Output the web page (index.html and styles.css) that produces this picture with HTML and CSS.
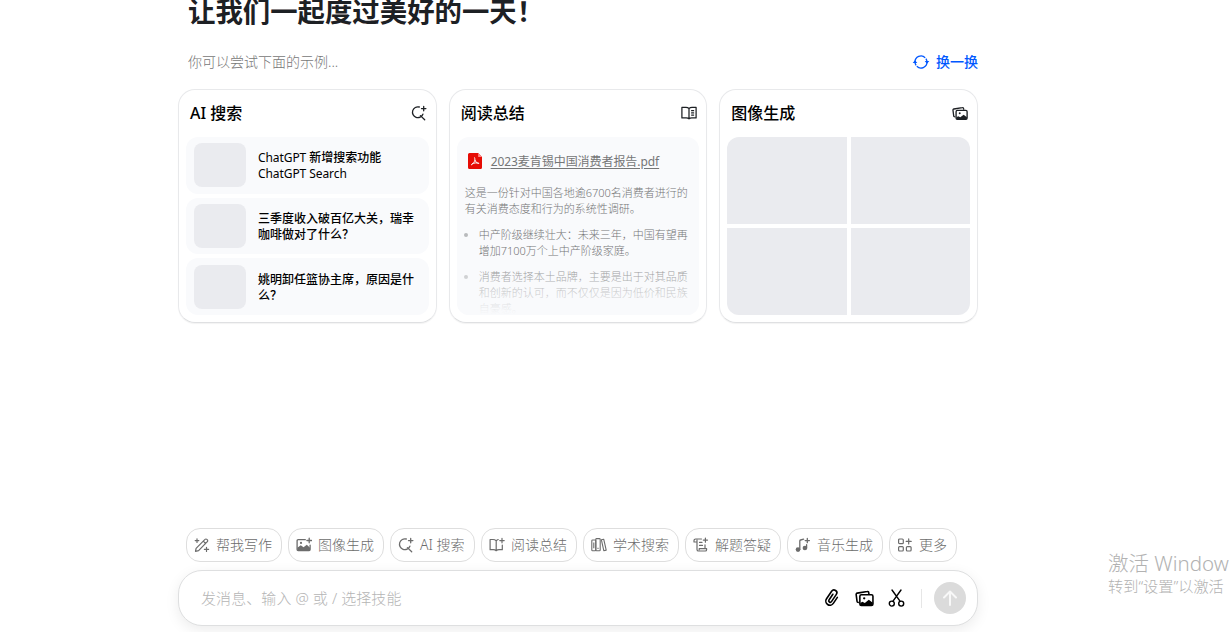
FILE: index.html
```
<!DOCTYPE html>
<html lang="zh-CN">
<head>
<meta charset="utf-8">
<title>AI 助手</title>
<link rel="stylesheet" href="styles.css">
</head>
<body>
<svg class="sprite" width="0" height="0" aria-hidden="true">
  <symbol id="i-search" viewBox="0 0 16 16"><g fill="none" stroke="currentColor" stroke-width="1.3" stroke-linecap="round"><path d="M8.300 2A5.400 5.400 0 1 0 11.900 9.200M9.400 10.600 13.700 14.700M12.700 1.400v4.400M10.500 3.600h4.400"/></g></symbol>
  <symbol id="i-photos" viewBox="0 0 18 16"><g fill="none" stroke="currentColor" stroke-width="1.5" stroke-linejoin="round"><path d="M3.700 11.700 2.600 11.500a1 1 0 0 1-.7-1L1.100 4.300a1.200 1.200 0 0 1 1-1.400l9.500-1.500a1.200 1.200 0 0 1 1.400 1l.2 1.400"/><rect x="4.600" y="4.500" width="12.400" height="10" rx="1.400"/></g><path fill="currentColor" d="M5 12.200l2-1.200 2.300 1.200 3.800-2.900 3.700 2.800v2.400H5z"/><circle cx="8.700" cy="7.800" r="1.100" fill="currentColor"/></symbol>
  <symbol id="i-plusimage" viewBox="0 0 16 16"><g fill="none" stroke="currentColor" stroke-width="1.3" stroke-linecap="round" stroke-linejoin="round"><path d="M9.300 2.700H2.100a1 1 0 0 0-1 1v8.800a1 1 0 0 0 1 1h11a1 1 0 0 0 1-1V8.200M13.200 1.200v4.600M10.900 3.500h4.600"/></g><path fill="currentColor" d="M1.300 10.800l3.500-2.600 2.700 2.100 3.300-2.500 3.200 3v2.500H1.300z"/><circle cx="5" cy="5.900" r="1.100" fill="currentColor"/></symbol>
  <symbol id="i-plusbook" viewBox="0 0 16 16"><g fill="none" stroke="currentColor" stroke-width="1.200" stroke-linecap="round" stroke-linejoin="round"><path d="M7.200 3.800Q6 2.500 4 2.500H1.100v10.200h3.200q1.800 0 2.900 1 1.100-1 2.900-1h3.200V8M7.200 3.800v9.700M7.200 3.800Q8 2.800 9.200 2.500M13 1.400v4.400M10.800 3.600h4.400"/></g></symbol>
</svg>
<main class="page">
  <h1 class="title">让我们一起度过美好的一天！</h1>
  <div class="hint">
    <span>你可以尝试下面的示例...</span>
    <a class="refresh"><svg width="16" height="16" viewBox="0 0 16 16"><g fill="none" stroke="currentColor" stroke-width="1.300"><path d="M2 8A6 6 0 0 1 12.200 3.700M12.900 4.600A6 6 0 0 1 14 8M14 8A6 6 0 0 1 3.800 12.300M3.100 11.400A6 6 0 0 1 2 8"/></g><path fill="currentColor" d="M-.3 9 2 6.300l2.300 2.700zM11.700 7h4.600L14 9.700z"/></svg><span>换一换</span></a>
  </div>
  <section class="cards">
    <article class="card">
      <header class="card-head"><h2>AI 搜索</h2><svg width="16" height="16"><use href="#i-search"/></svg></header>
      <div class="news">
        <div class="news-item"><i class="thumb"></i><p><span class="latin">ChatGPT</span> 新增搜索功能<br><span class="latin">ChatGPT Search</span></p></div>
        <div class="news-item"><i class="thumb"></i><p>三季度收入破百亿大关，瑞幸<br>咖啡做对了什么？</p></div>
        <div class="news-item"><i class="thumb"></i><p>姚明卸任篮协主席，原因是什<br>么？</p></div>
      </div>
    </article>
    <article class="card">
      <header class="card-head"><h2>阅读总结</h2><svg width="16" height="16" viewBox="0 0 16 16"><path fill="none" stroke="currentColor" stroke-width="1.250" stroke-linejoin="round" stroke-linecap="round" d="M8 3.400Q6.800 2.400 5 2.400H.9v10.500h4.300q1.800 0 2.800 1 1-1 2.800-1h4.300V2.400H11Q9.200 2.400 8 3.400zM8 3.400v10.400M10.600 5.700h2M10.600 7.900h2M10.600 10.100h2"/></svg></header>
      <div class="doc">
        <div class="doc-file"><svg width="14" height="16" viewBox="0 0 14 16"><path fill="#e60c05" d="M2 0h8.200L14 4v10.500a1.500 1.500 0 0 1-1.500 1.500h-11A1.500 1.500 0 0 1 0 14.500V1.500A1.500 1.500 0 0 1 1.500 0z"/><path fill="#f88" d="M10.200 0 14 4h-3.800z"/><path fill="none" stroke="#fff" stroke-width="1" stroke-linecap="round" d="M6.600 4.800c1 2.300-.3 5.200-3.200 7M4.500 10.600c2-.8 4.200-1 6.300-.4M7 7.200c.5 1.500 1.500 2.600 3.300 3.200"/></svg><a>2023麦肯锡中国消费者报告.pdf</a></div>
        <p>这是一份针对中国各地逾6700名消费者进行的<br>有关消费态度和行为的系统性调研。</p>
        <ul>
          <li>中产阶级继续壮大：未来三年，中国有望再<br>增加7100万个上中产阶级家庭。</li>
          <li>消费者选择本土品牌，主要是出于对其品质<br>和创新的认可，而不仅仅是因为低价和民族<br>自豪感。</li>
        </ul>
      </div>
    </article>
    <article class="card">
      <header class="card-head"><h2>图像生成</h2><svg width="16" height="15"><use href="#i-photos"/></svg></header>
      <div class="gallery"><i></i><i></i><i></i><i></i></div>
    </article>
  </section>
  <nav class="chips">
    <button class="chip"><svg width="16" height="16" viewBox="0 0 16 16"><g fill="none" stroke="currentColor" stroke-width="1.200" stroke-linecap="round" stroke-linejoin="round"><path d="M1.500 14.300l.6-3L11 2.400a1.300 1.300 0 0 1 1.900 0l.4.4a1.300 1.300 0 0 1 0 1.900L4.600 13.700zM9.300 4.200l2.300 2.300M3 1.800v3.600M1.200 3.600h3.600M12.500 10.300v4.200M10.400 12.400h4.200"/></g></svg><span>帮我写作</span></button>
    <button class="chip"><svg width="16" height="16"><use href="#i-plusimage"/></svg><span>图像生成</span></button>
    <button class="chip chip-ai"><svg width="16" height="16"><use href="#i-search"/></svg><span>AI 搜索</span></button>
    <button class="chip"><svg width="16" height="16"><use href="#i-plusbook"/></svg><span>阅读总结</span></button>
    <button class="chip"><svg width="16" height="16" viewBox="0 0 16 16"><g fill="none" stroke="currentColor" stroke-width="1.100" stroke-linejoin="round"><rect x=".8" y="3" width="4" height="10.800" rx=".8"/><rect x="4.800" y="1.600" width="4.400" height="12.200" rx=".8"/><path d="M10.400 2.800l2.300-.6 2.500 10.900-2.400.6zM2.800 5.400v5.800M7 10.800v1.200"/></g></svg><span>学术搜索</span></button>
    <button class="chip"><svg width="16" height="16" viewBox="0 0 16 16"><g fill="none" stroke="currentColor" stroke-width="1.200" stroke-linecap="round" stroke-linejoin="round"><path d="M8.500 2H2.600A1.600 1.600 0 0 0 1 3.600V5h3M4 3.200v9.200A1.600 1.600 0 0 0 5.600 14h6.700a1.300 1.300 0 0 0 1.300-1.300v-1H6.200v1M12 7.800v3.600M6.500 5.400h2.500M6.500 8.400h3"/><path d="M12.400 1v4.200M10.300 3.100h4.200"/></g></svg><span>解题答疑</span></button>
    <button class="chip"><svg width="16" height="16" viewBox="0 0 16 16"><g fill="none" stroke="currentColor" stroke-width="1.300" stroke-linecap="round"><path d="M4.800 12.500V4q0-.8.8-1l3-.8M11.600 11V7.700M12.300 1.500v4.200M10.200 3.600h4.200"/></g><circle cx="3" cy="12.600" r="2.300" fill="currentColor"/><circle cx="9.900" cy="11" r="2.300" fill="currentColor"/></svg><span>音乐生成</span></button>
    <button class="chip"><svg width="16" height="16" viewBox="0 0 16 16"><g fill="none" stroke="currentColor" stroke-width="1.200" stroke-linecap="round"><rect x="1.600" y="2" width="4.700" height="4.700" rx="1"/><rect x="1.600" y="9.600" width="4.700" height="4.400" rx="1"/><rect x="9.400" y="9.600" width="4.700" height="4.400" rx="1"/><path d="M11.700 1.900v5M9.200 4.400h5"/></g></svg><span>更多</span></button>
  </nav>
  <div class="composer">
    <span class="placeholder">发消息、输入 @ 或 / 选择技能</span>
    <div class="tools">
      <svg width="18" height="20" viewBox="0 0 18 20"><path transform="rotate(34 9 10)" fill="none" stroke="currentColor" stroke-width="1.600" stroke-linecap="round" d="M13.100 6.500v7.200a4.100 4.100 0 0 1-8.200 0V4.600a2.800 2.800 0 0 1 5.700 0v8.700a1.500 1.500 0 0 1-3 0V6.400"/></svg>
      <svg width="19" height="17"><use href="#i-photos"/></svg>
      <svg width="18" height="20" viewBox="0 0 18 20"><g fill="none" stroke="currentColor" stroke-width="1.400" stroke-linecap="round"><circle cx="3.800" cy="15.600" r="2.500"/><circle cx="13.200" cy="15.600" r="2.500"/><path d="M5 13.200 13 2M12 13.200 4 2"/></g></svg>
    </div>
    <i class="divider"></i>
    <button class="send"><svg width="32" height="32" viewBox="0 0 32 32"><path fill="none" stroke="#fff" stroke-opacity=".8" stroke-width="2" stroke-linecap="round" stroke-linejoin="round" d="M16 23V9.500M10 15.500l6-6 6 6"/></svg></button>
  </div>
</main>
<aside class="watermark"><strong>激活 Windows</strong><span>转到“设置”以激活</span></aside>
</body>
</html>
```
FILE: styles.css
```
* { box-sizing: border-box; }
html, body { height: 632px; overflow: hidden; }
body { margin: 0; background: #fff; color: #000; font-family: "Noto Sans", "Noto Sans CJK SC", sans-serif; }
h1, h2, p, ul { margin: 0; padding: 0; font-weight: 500; }
svg { flex: none; display: block; overflow: visible; }
.sprite { position: absolute; }
button { font: inherit; border: 0; background: none; }

.page { width: 800px; height: 632px; margin-left: 178px; display: flex; flex-direction: column; }
.title { height: 52px; margin-top: -10px; padding-left: 10px; font-family: "Noto Sans CJK SC", sans-serif; font-size: 27.4px; line-height: 40px; font-weight: 700; color: #1d2024; white-space: nowrap; }
.hint { height: 40px; padding: 0 0 0 10px; display: flex; justify-content: space-between; align-items: center; font-size: 14px; color: #777; font-weight: 300; }
.hint span { padding-bottom: 2px; }
.refresh { display: flex; gap: 7px; align-items: center; color: #0057ff; font-weight: 500; }

.cards { margin-top: 7px; height: 234px; display: grid; grid-template-columns: repeat(3, 1fr); gap: 12px; }
.card { display: flex; flex-direction: column; padding: 0 7px 7px; border: 1px solid #e8e9eb; border-bottom-color: #dfe0e2; border-radius: 17px; box-shadow: 0 1px 1px rgba(0,0,0,.05); }
.card-head { height: 47px; flex: none; padding: 0 2px 1px 4px; display: flex; align-items: center; justify-content: space-between; color: #1d2024; }
.card-head h2 { font-size: 16px; color: #000; padding-bottom: 2px; }
.news { flex: 1; display: grid; grid-template-rows: repeat(3, 1fr); gap: 4px; }
.news-item { display: flex; align-items: center; padding-left: 8px; gap: 12px; border-radius: 12px; background: #f9fafc; white-space: nowrap; }
.news-item p { font-size: 12px; line-height: 16px; padding-top: 2px; }
.latin { font-weight: 400; letter-spacing: -.08px; }
.thumb { width: 52px; height: 44px; border-radius: 8px; background: #eaebef; flex: none; }

.doc { height: 178px; overflow: hidden; padding: 17px 8px 0; border-radius: 12px; background: #f9fafc; color: #757677; font-size: 11px; line-height: 16px; white-space: nowrap; position: relative; }
.doc::after { content: ""; position: absolute; inset: 118px 0 0; background: linear-gradient(rgba(249,250,252,0), #f9fafc); }
.doc-file { display: flex; gap: 9px; align-items: center; padding-left: 3px; height: 16px; margin-bottom: 15px; }
.doc-file svg { margin-top: -2px; }
.doc-file a { font-size: 12px; font-weight: 400; text-decoration: underline; text-underline-offset: 2px; letter-spacing: -.06px; }
.doc p, .doc li { font-weight: 300; }
.doc ul { list-style: none; }
.doc li { margin-top: 10px; padding-left: 14px; position: relative; }
.doc li::before { content: ""; position: absolute; left: -1px; top: 6px; width: 4px; height: 4px; border-radius: 50%; background: #b9babc; }
.gallery { height: 178px; display: grid; grid-template: 1fr 1fr / 1fr 1fr; gap: 4px; border-radius: 12px; overflow: hidden; }
.gallery i { background: #eaebef; }

.chips { margin-top: 205px; height: 34px; padding-left: 8px; display: flex; gap: 6px; }
.chip { width: 96px; padding: 0 0 0 7px; display: flex; align-items: center; gap: 6px; border: 1px solid #dedede; border-radius: 14px; color: #6c6c6c; font-size: 14px; font-weight: 300; white-space: nowrap; flex: none; }
.chip span { padding-bottom: 2px; }
.chip-ai { width: 85px; }
.chip:last-child { width: 68px; }
.composer { margin-top: 8px; height: 56px; flex: none; padding: 0 11px 0 22px; display: flex; align-items: center; border: 1px solid #dedfe0; border-radius: 24px; background: #fff; box-shadow: 0 4px 14px rgba(0,0,0,.08); }
.placeholder { flex: 1; font-size: 15px; letter-spacing: .08px; color: #b5b5b5; font-weight: 300; padding-bottom: 2px; }
.tools { display: flex; align-items: center; gap: 14px; }
.divider { width: 1px; height: 19px; margin: 0 12px 0 15px; background: #e6e6e6; }
.send { width: 32px; height: 32px; padding: 0; border-radius: 50%; background: #dbdbdb; }
.watermark { position: absolute; left: 1108px; top: 550px; white-space: nowrap; color: #b2b2b2; display: flex; flex-direction: column; font-weight: 300; }
.watermark strong { font-size: 20.500px; line-height: 26px; font-weight: 300; }
.watermark span { font-size: 15.200px; line-height: 21px; }
```
